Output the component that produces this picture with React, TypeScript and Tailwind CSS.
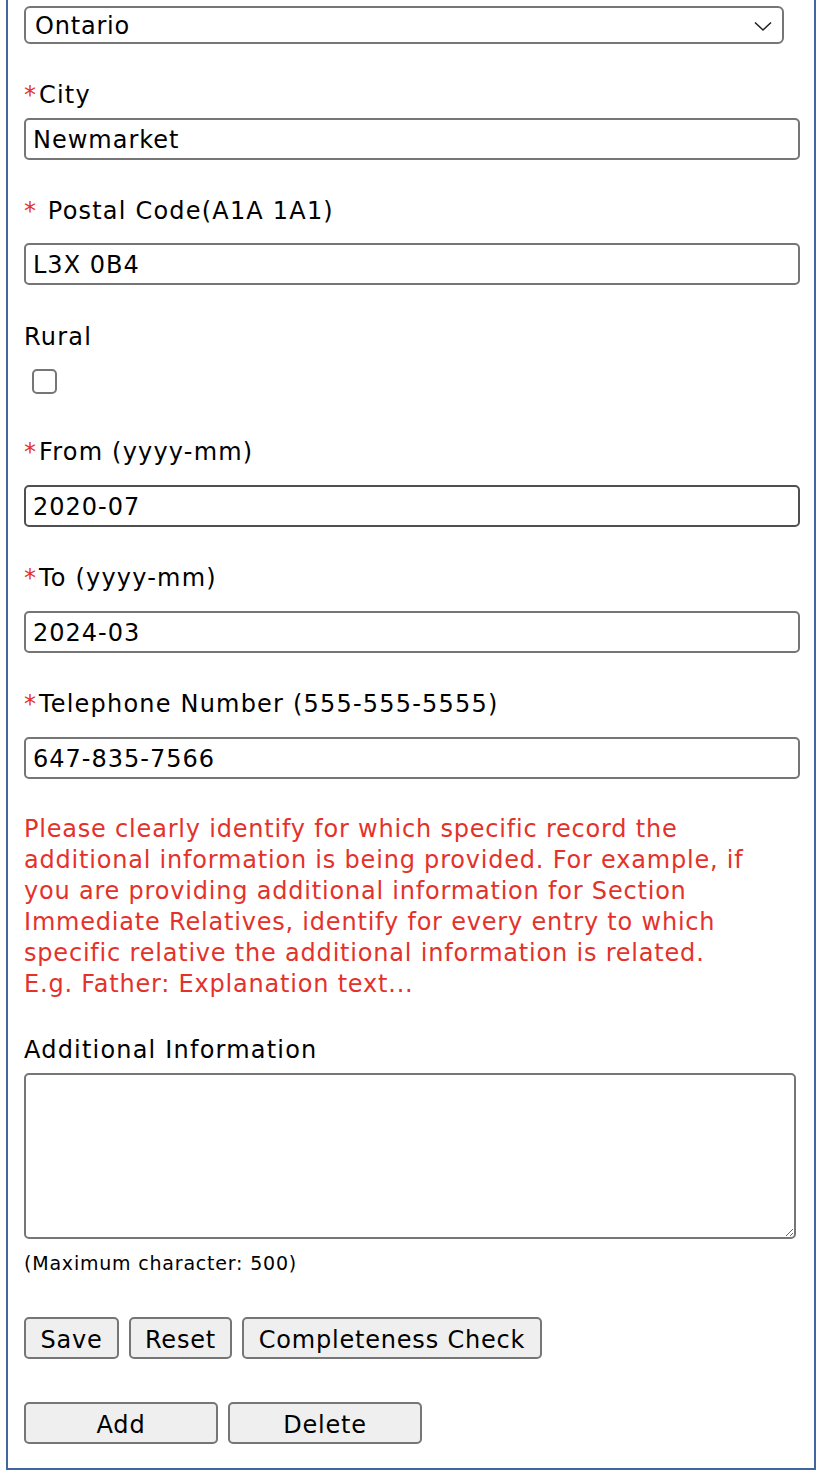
import React from "react";

const font = { fontFamily: '"DejaVu Sans", Verdana, sans-serif' };

function Label({ children, req, space }: { children: React.ReactNode; req?: boolean; space?: boolean }) {
  return (
    <div className="h-[30px] leading-[30px] text-[24px] tracking-[1.2px] text-black whitespace-nowrap">
      {req && <span className="text-[#e4322b] tracking-[3px]">*</span>}
      {space && " "}
      {children}
    </div>
  );
}

function TextInput({ value, dark }: { value: string; dark?: boolean }) {
  return (
    <div
      className={`h-[42px] w-[776px] rounded-[5px] border-2 ${dark ? "border-[#505050]" : "border-[#767676]"} bg-white px-[7px] pt-[1px] flex items-center text-[24px] tracking-[1px] text-black`}
    >
      {value}
    </div>
  );
}

function Btn({ children, w }: { children: React.ReactNode; w: string }) {
  return (
    <button
      className={`${w} h-[42px] rounded-[5px] border-2 border-[#767676] bg-[#efefef] pt-[3px] text-[24px] tracking-[0.8px] text-black flex items-center justify-center`}
      style={font}
    >
      {children}
    </button>
  );
}

export default function App() {
  return (
    <div className="w-[828px] h-[1480px] bg-white tracking-[0.8px]" style={font}>
      <div className="ml-[6px] w-[810px] border-l-2 border-r-2 border-b-2 border-[#4267a0] pl-[16px] pb-[24px]">
        <div className="pt-[6px]">
          <div className="h-[38px] w-[760px] rounded-[6px] border-2 border-[#767676] bg-white pl-[9px] pr-[6px] pt-[1px] flex items-center justify-between text-[24px] text-black">
            <span>Ontario</span>
            <svg width="20" height="12" viewBox="0 0 20 12" className="mr-[3px]">
              <path d="M2 2.5 L10 10 L18 2.5" fill="none" stroke="#222" strokeWidth="1.6" />
            </svg>
          </div>
        </div>

        <div className="mt-[36px]">
          <Label req>City</Label>
        </div>
        <div className="mt-[8px]">
          <TextInput value="Newmarket" />
        </div>

        <div className="mt-[36px]">
          <Label req space>Postal Code(A1A 1A1)</Label>
        </div>
        <div className="mt-[17px]">
          <TextInput value="L3X 0B4" />
        </div>

        <div className="mt-[37px]">
          <Label>Rural</Label>
        </div>
        <div className="mt-[17px] pl-[8px]">
          <div className="h-[25px] w-[25px] rounded-[5px] border-2 border-[#767676] bg-white" />
        </div>

        <div className="mt-[43px]">
          <Label req>From (yyyy-mm)</Label>
        </div>
        <div className="mt-[18px]">
          <TextInput value="2020-07" dark />
        </div>

        <div className="mt-[36px]">
          <Label req>To (yyyy-mm)</Label>
        </div>
        <div className="mt-[18px]">
          <TextInput value="2024-03" />
        </div>

        <div className="mt-[36px]">
          <Label req>Telephone Number (555-555-5555)</Label>
        </div>
        <div className="mt-[18px]">
          <TextInput value="647-835-7566" />
        </div>

        <p className="mt-[35px] w-[768px] text-[24px] leading-[31px] text-[#e4322b]">
          Please clearly identify for which specific record the additional information is being provided. For
          example, if you are providing additional information for Section Immediate Relatives, identify for every
          entry to which specific relative the additional information is related.
          <br />
          E.g. Father: Explanation text...
        </p>

        <div className="mt-[35px]">
          <Label>Additional Information</Label>
        </div>
        <div className="mt-[8px]">
          <textarea
            className="block h-[166px] w-[772px] rounded-[5px] border-2 border-[#767676] bg-white resize-y outline-none"
            defaultValue=""
          />
        </div>
        <div className="mt-[12px] h-[24px] leading-[24px] text-[19px] text-black">(Maximum character: 500)</div>

        <div className="mt-[42px] flex gap-[10px]">
          <Btn w="w-[95px]">Save</Btn>
          <Btn w="w-[103px]">Reset</Btn>
          <Btn w="w-[300px]">Completeness Check</Btn>
        </div>

        <div className="mt-[43px] flex gap-[10px]">
          <Btn w="w-[194px]">Add</Btn>
          <Btn w="w-[194px]">Delete</Btn>
        </div>
      </div>
    </div>
  );
}
